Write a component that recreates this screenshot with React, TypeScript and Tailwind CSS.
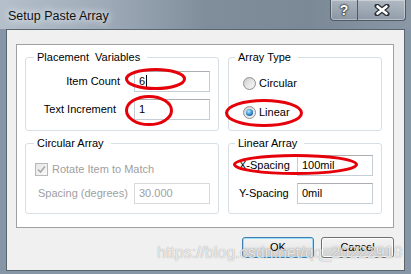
import React from 'react'

function TextBox({ value, disabled, caret, className = '' }: { value: string; disabled?: boolean; caret?: boolean; className?: string }) {
  return (
    <div
      className={`flex h-[21px] w-[76px] items-center border bg-white pl-[4px] ${
        disabled ? 'border-[#d9d9d9] text-[#a0a0a0]' : 'border-[#c5cdd6] border-t-[#abadb3] text-black'
      } ${className}`}
    >
      <span>{value}</span>
      {caret && <span className="ml-[1px] h-[13px] w-[1px] bg-black" />}
    </div>
  )
}

function Radio({ label, checked }: { label: string; checked?: boolean }) {
  return (
    <div className="flex h-[13px] items-center">
      <div className="flex h-[13px] w-[13px] items-center justify-center rounded-full border border-[#8f8f8f] bg-[linear-gradient(135deg,#cfcfcf,#f6f6f6)]">
        {checked ? (
          <div className="h-[7px] w-[7px] rounded-full bg-[radial-gradient(circle_at_40%_35%,#b6ecff,#2a86d0_55%,#0d3f78)]" />
        ) : (
          <div className="h-[7px] w-[7px] rounded-full bg-[linear-gradient(135deg,#d8d8d8,#f4f4f4)]" />
        )}
      </div>
      <span className="ml-[3px] leading-[13px]">{label}</span>
    </div>
  )
}

function Group({ title, className = '', legendClass = '', children }: { title: string; className?: string; legendClass?: string; children: React.ReactNode }) {
  return (
    <fieldset className={`rounded-[3px] border border-[#d5dfe5] ${className}`}>
      <legend className={`pl-[3px] pr-[7px] leading-[13px] ${legendClass}`}>{title}</legend>
      {children}
    </fieldset>
  )
}

function Btn({ label, focused, className = '' }: { label: string; focused?: boolean; className?: string }) {
  return (
    <div
      className={`flex h-[21px] items-center justify-center rounded-[3px] border bg-[linear-gradient(180deg,#f3f3f3_0%,#ebebeb_48%,#dcdcdc_52%,#d0d0d0_100%)] ${
        focused ? 'border-[#3c7fb1] shadow-[inset_0_0_0_1px_#9fdcf7]' : 'border-[#707070] shadow-[inset_0_0_0_1px_#fcfcfc]'
      } ${className}`}
    >
      {label}
    </div>
  )
}

export default function App() {
  return (
    <div className="relative flex h-[274px] w-[411px] flex-col overflow-hidden bg-[#8696a6] font-['Liberation_Sans',Arial,sans-serif] text-[11px] text-black">
      {/* title bar */}
      <div className="flex h-[29px] shrink-0 items-start bg-[linear-gradient(90deg,#b4bfca_0%,#a2aebb_22%,#808e9c_50%,#7b8997_75%,#8a97a5_100%)]">
        <div className="ml-[8px] mt-[8px] text-[12.5px] leading-[16px] text-[#111] [text-shadow:0_0_6px_#e8edf2,0_0_10px_#e8edf2]">
          Setup Paste Array
        </div>
        <div className="ml-auto mr-[5px] flex h-[21px] rounded-b-[4px] border border-t-0 border-[#4e5a66] shadow-[inset_0_0_0_1px_rgba(255,255,255,0.35)]">
          <div className="flex w-[27px] items-center justify-center rounded-bl-[4px] border-r border-[#4e5a66] bg-[linear-gradient(180deg,rgba(255,255,255,0.35),rgba(255,255,255,0.08))] text-[14px] font-bold leading-none text-white [text-shadow:0_0_1px_#222,0_0_2px_#222,0_0_2px_#222]">
            ?
          </div>
          <div className="flex w-[47px] items-center justify-center rounded-br-[4px] bg-[linear-gradient(180deg,rgba(255,255,255,0.35),rgba(255,255,255,0.08))]">
            <svg width="16" height="12" viewBox="0 0 16 12">
              <path d="M3 2 L13 10 M13 2 L3 10" stroke="#2b3137" strokeWidth="5" strokeLinecap="round" />
              <path d="M3.5 2.5 L12.5 9.5 M12.5 2.5 L3.5 9.5" stroke="#fff" strokeWidth="2.6" strokeLinecap="round" />
            </svg>
          </div>
        </div>
      </div>

      {/* client area */}
      <div className="mx-[6px] flex h-[242px] shrink-0 flex-col border border-[#59666f] bg-[#f0f0f0] pl-[9px] pr-[10px] pt-[14px]">
        <div className="flex h-[184px] shrink-0 gap-[9px] border border-[#a0a0a0] bg-white pl-[8px] pt-[6px]">
          {/* left column */}
          <div className="flex w-[194px] flex-col gap-[6px]">
            <Group title="Placement  Variables" className="h-[80px]" legendClass="ml-[8px] whitespace-pre">
              <div className="mt-[7px] flex flex-col gap-[7px] pr-[8px]">
                <div className="flex h-[21px] items-center justify-end">
                  <span className="mr-[14px]">Item Count</span>
                  <TextBox value="6" caret />
                </div>
                <div className="flex h-[21px] items-center justify-end">
                  <span className="mr-[18px]">Text Increment</span>
                  <TextBox value="1" />
                </div>
              </div>
            </Group>
            <Group title="Circular Array" className="h-[77px]" legendClass="ml-[8px]">
              <div className="mt-[13px] flex flex-col gap-[7px] pr-[8px] text-[#a0a0a0]">
                <div className="flex h-[13px] items-center pl-[9px]">
                  <div className="flex h-[13px] w-[13px] items-center justify-center border border-[#b8b8b8] bg-[linear-gradient(135deg,#e6e6e6,#fafafa)]">
                    <svg width="9" height="9" viewBox="0 0 9 9">
                      <path d="M1 4.5 L3.5 7 L8 1.5" stroke="#a8a8a8" strokeWidth="1.6" fill="none" />
                    </svg>
                  </div>
                  <span className="ml-[4px]">Rotate Item to Match</span>
                </div>
                <div className="flex h-[21px] items-center justify-between pl-[12px]">
                  <span>Spacing (degrees)</span>
                  <TextBox value="30.000" disabled />
                </div>
              </div>
            </Group>
          </div>

          {/* right column */}
          <div className="flex w-[154px] flex-col gap-[6px]">
            <Group title="Array Type" className="h-[80px]" legendClass="ml-[6px]">
              <div className="mt-[13px] flex flex-col gap-[16px] pl-[14px]">
                <Radio label="Circular" />
                <Radio label="Linear" checked />
              </div>
            </Group>
            <Group title="Linear Array" className="h-[77px]" legendClass="ml-[6px]">
              <div className="mt-[5px] flex flex-col gap-[7px] pl-[10px] pr-[8px]">
                <div className="flex h-[21px] items-center justify-between">
                  <span>X-Spacing</span>
                  <TextBox value="100mil" />
                </div>
                <div className="flex h-[21px] items-center justify-between">
                  <span>Y-Spacing</span>
                  <TextBox value="0mil" />
                </div>
              </div>
            </Group>
          </div>
        </div>

        <div className="mt-[9px] flex justify-end gap-[7px]">
          <Btn label="OK" focused className="w-[72px]" />
          <Btn label="Cancel" className="w-[73px]" />
        </div>
      </div>

      {/* red annotation marks */}
      <svg className="pointer-events-none absolute left-0 top-0" width="411" height="274" viewBox="0 0 411 274">
        <g fill="none" stroke="#e5000a" strokeWidth="3">
          <ellipse cx="155.5" cy="79" rx="29" ry="9.5" />
          <ellipse cx="149" cy="110.5" rx="22.5" ry="14" />
          <ellipse cx="264" cy="113" rx="37.5" ry="12.5" />
          <ellipse cx="295.5" cy="164.5" rx="61" ry="9" />
        </g>
      </svg>

      {/* watermark */}
      <div className="pointer-events-none absolute left-[157px] top-[243px] text-[16px] leading-[20px] text-white/80 [text-shadow:0_0_1px_rgba(0,0,0,0.45)]">
        https://blog.csdn.net/qq_20222919
      </div>
    </div>
  )
}
